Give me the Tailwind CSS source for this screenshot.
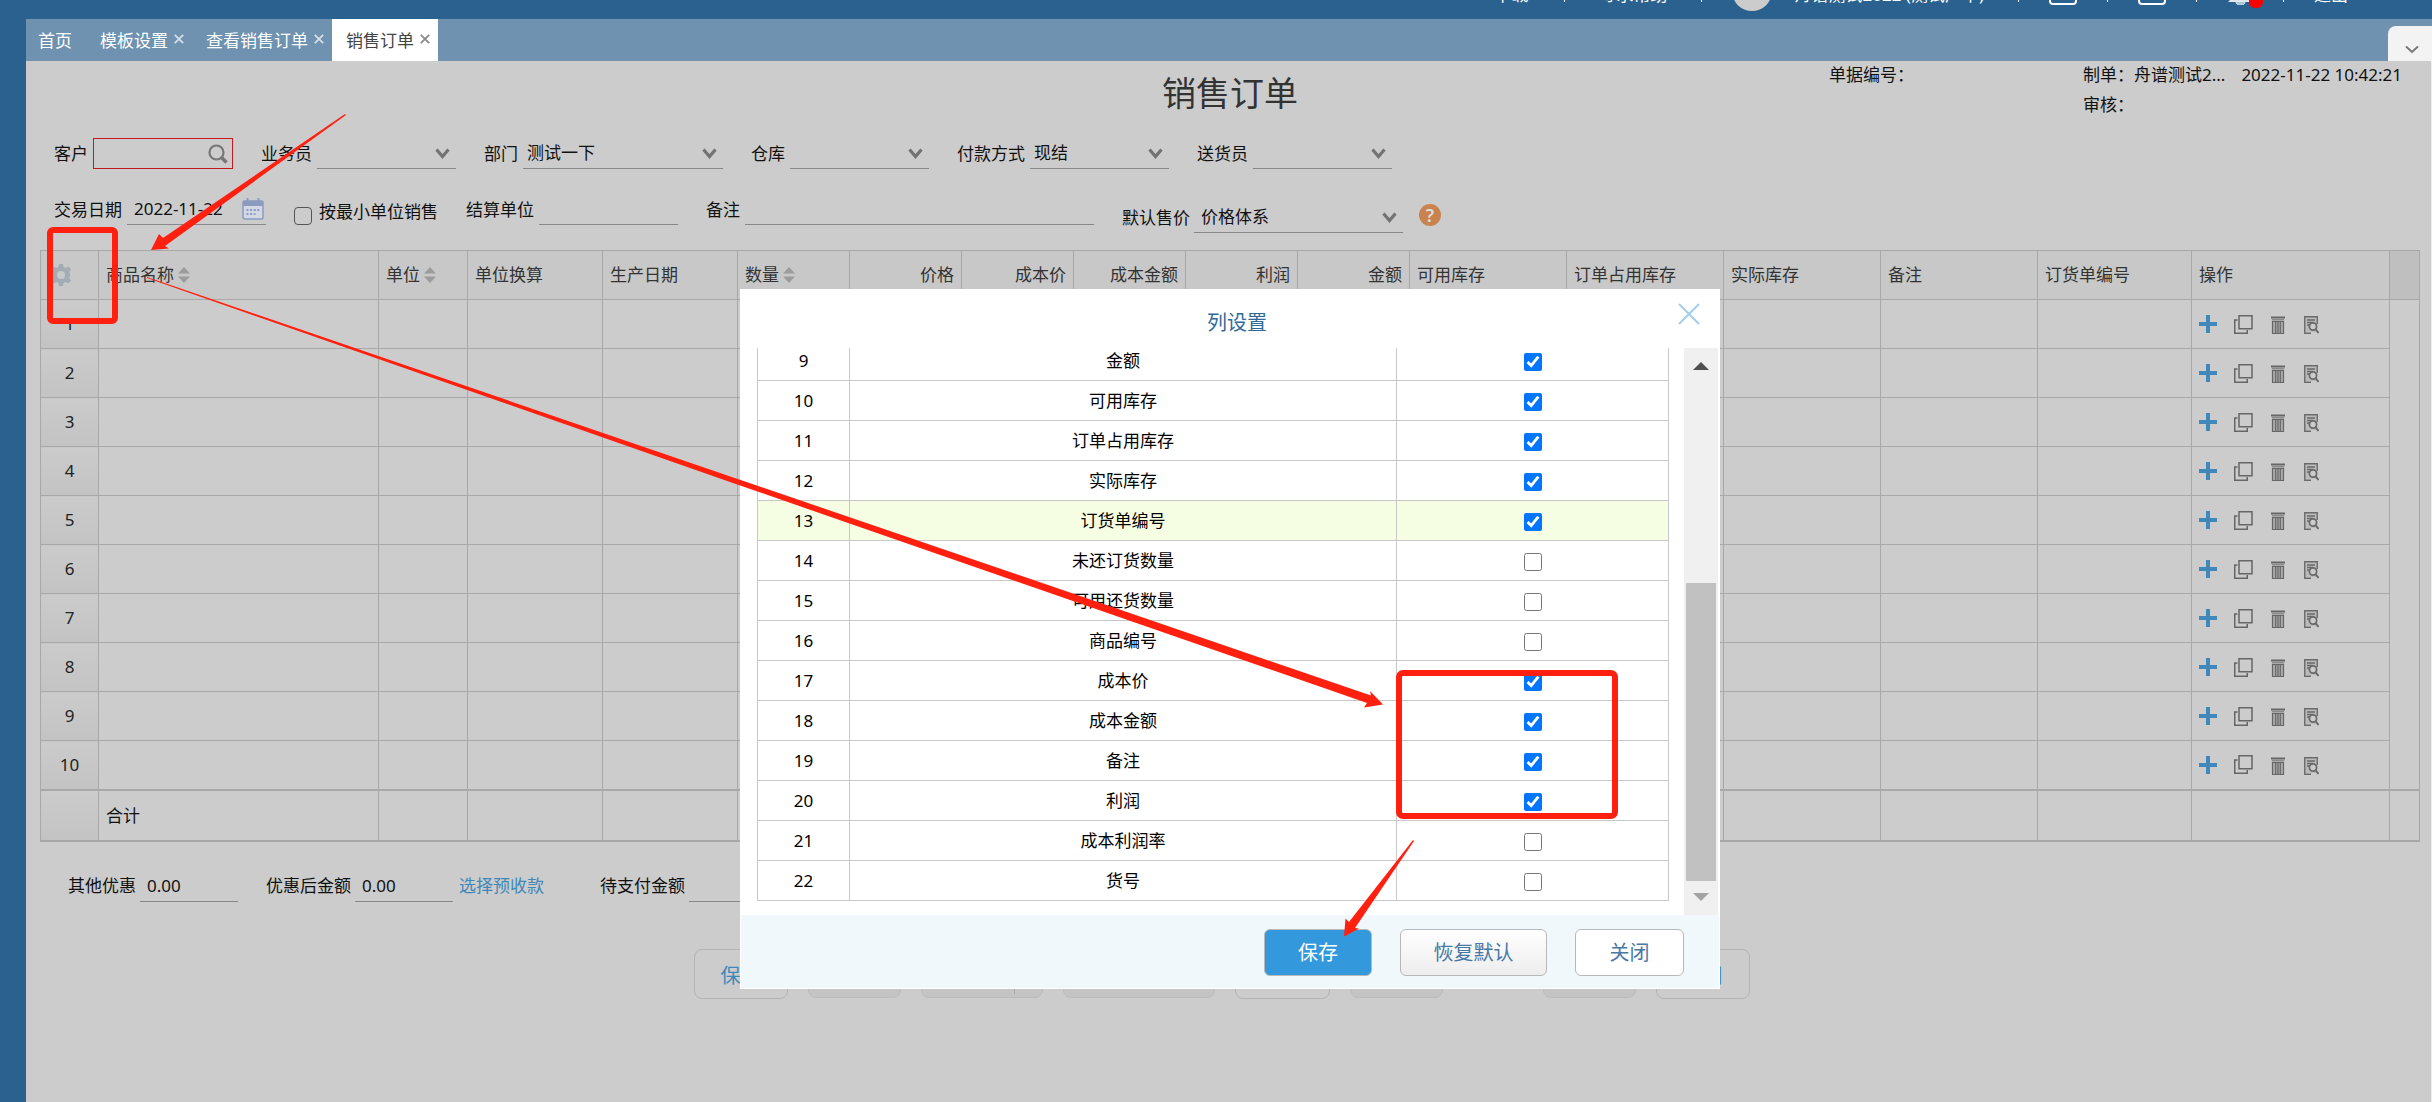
<!DOCTYPE html>
<html lang="zh-CN">
<head>
<meta charset="utf-8">
<title>销售订单</title>
<script src="https://cdn.jsdelivr.net/npm/@tailwindcss/browser@4"></script>
</head>
<body class="relative min-h-screen overflow-x-hidden bg-[#2a618f] font-['Noto_Sans','Noto_Sans_CJK_SC',sans-serif] text-[17px] leading-6 text-[#111]">

<svg class="hidden">
  <symbol id="chev" viewBox="0 0 15 11"><path d="M1.5 1.5 7.5 8.5 13.5 1.5" fill="none" stroke="#727272" stroke-width="3.2"/></symbol>
  <symbol id="sort" viewBox="0 0 12 16"><path d="M6 0 12 6.5H0ZM0 9.500H12L6 16Z" fill="#9c9c9c"/></symbol>
  <symbol id="x" viewBox="0 0 10 10"><path d="M.8.8 9.200 9.200M9.200.8.8 9.200" fill="none" stroke="currentColor" stroke-width="1.800"/></symbol>
  <symbol id="plus" viewBox="0 0 18 18"><path d="M7 0h4v7h7v4h-7v7H7v-7H0V7h7Z" fill="#3f88b9"/></symbol>
  <symbol id="copy" viewBox="0 0 19 19"><path d="M5 .75h13v13H5ZM3.500 5H.75v13.250h12.500V15" fill="none" stroke="#666" stroke-width="1.500"/></symbol>
  <symbol id="trash" viewBox="0 0 14 18"><path d="M0 .5h14v2H0Z" fill="#666"/><path d="M.8 3h12.400v1.500H.8Z" fill="#8a8a8a"/><path d="M1.500 5.500h11v12h-11ZM4.700 5.500v12M7 5.500v12M9.300 5.500v12" fill="#aaa" stroke="#666" stroke-width="1.200"/></symbol>
  <symbol id="find" viewBox="0 0 15 18"><path d="M1 1h12v15H1Z" fill="#bbb"/><path d="M7 17.200H.75V.75h12.500V8M3 4h8M3 6.500h6M3 9h2" fill="none" stroke="#6a6a6a" stroke-width="1.400"/><circle cx="9" cy="10.500" r="3.600" fill="#ccc" stroke="#6a6a6a" stroke-width="1.800"/><path d="m11.500 13 3 4" stroke="#6a6a6a" stroke-width="2"/></symbol>
</svg>

<header class="flex h-[19px] flex-col justify-end overflow-hidden text-white">
  <div class="flex h-12 shrink-0 items-center justify-end gap-[30px] pr-[84px]">
    <div class="flex items-center gap-[34px]">
      <a href="#" class="mr-0.5">下载</a><i class="h-3.5 w-px bg-white"></i>
      <a href="#">寻求帮助</a><i class="h-3.5 w-px bg-white"></i>
    </div>
    <span class="mb-2 size-10 shrink-0 rounded-full bg-[#ccc]"></span>
    <span class="-ml-2 mr-1">舟谱测试2022 (测试产中)</span>
    <i class="h-3.5 w-px bg-white"></i>
    <button aria-label="窗口" class="h-5 w-7 rounded border-2 border-white"></button>
    <i class="h-3.5 w-px bg-white"></i>
    <button aria-label="消息" class="h-5 w-7 rounded border-2 border-white"></button>
    <i class="h-3.5 w-px bg-white"></i>
    <button aria-label="通知" class="relative h-5 w-[26px]">
      <svg viewBox="0 0 26 20" class="h-5 w-[26px]"><path d="M4 14V8a9 9 0 0 1 18 0v6l3 3H1Z" fill="#dfe8ef"/><path d="M9 17a4.500 3 0 0 0 9 0" fill="#a9c3d8" stroke="#dfe8ef"/></svg>
      <span class="absolute -right-2.5 bottom-[-3px] h-5 w-3.5 rounded-md bg-[#f00]"></span>
    </button>
    <i class="h-3.5 w-px bg-white"></i>
    <a href="#">退出</a>
  </div>
</header>

<nav class="ml-[26px] flex h-[42px] items-stretch bg-[#6e92af] pt-px text-white">
  <a href="#" class="flex items-center pl-3 pr-3.5">首页</a>
  <div class="flex items-center gap-1.5 pl-3.5 pr-[11px]"><a href="#">模板设置</a><button aria-label="关闭模板设置" class="mb-1 text-[#d5dfe8]"><svg class="size-2.5"><use href="#x"/></svg></button></div>
  <div class="flex items-center gap-1.5 pl-[11px] pr-2"><a href="#">查看销售订单</a><button aria-label="关闭查看销售订单" class="mb-1 text-[#d5dfe8]"><svg class="size-2.5"><use href="#x"/></svg></button></div>
  <div class="-mt-px flex items-center gap-1.5 bg-white pl-3.5 pr-2 pt-px text-[#444]"><a href="#">销售订单</a><button aria-label="关闭销售订单" class="mb-1 text-[#8a8a8a]"><svg class="size-2.5"><use href="#x"/></svg></button></div>
  <button aria-label="展开" class="ml-auto flex h-[35px] w-11 items-end justify-center self-end rounded-tl-lg bg-[#f3f3f3] pb-[7px] pl-1"><svg viewBox="0 0 14 9" class="h-[9px] w-3.5"><path d="M1 1.500 7 7 13 1.500" fill="none" stroke="#777" stroke-width="2"/></svg></button>
</nav>

<main class="ml-[26px] min-h-[1041px] border-r border-[#eee] bg-[#ccc] pl-3.5 pr-[11px]">
  <div class="grid h-[77px] grid-cols-[1fr_auto_1fr]">
    <span></span>
    <h1 class="pt-2 text-[34px] leading-[48px] text-[#333]">销售订单</h1>
    <div class="flex justify-end gap-[169px] pr-[18px] pt-0.5">
      <span>单据编号：</span>
      <div class="grid grid-cols-[auto_auto] grid-rows-[30px_30px] content-start gap-x-4"><span>制单：舟谱测试2...</span><span>2022-11-22 10:42:21</span><span>审核：</span></div>
    </div>
  </div>

  <form>
    <div class="flex gap-7 pl-3.5">
      <label class="flex items-center gap-[5px]">客户
        <span class="flex h-[31px] w-[140px] items-center border border-[#c4181c] pr-1"><input class="w-0 flex-1 bg-transparent outline-none"><svg viewBox="0 0 20 20" class="size-5"><circle cx="8.500" cy="8.500" r="7" fill="none" stroke="#777" stroke-width="2.200"/><path d="m13.500 13.500 5 5" stroke="#777" stroke-width="3.500"/></svg></span></label>
      <label class="flex items-center gap-[5px]">业务员
        <span class="grid h-[31px] w-[139px] items-center border-b border-[#888]"><select class="col-start-1 row-start-1 appearance-none pl-[7px] outline-none"><option></option></select><svg class="col-start-1 row-start-1 mr-1.5 h-[11px] w-[15px] justify-self-end"><use href="#chev"/></svg></span></label>
      <label class="flex items-center gap-[5px]">部门
        <span class="grid h-[31px] w-[200px] items-center border-b border-[#888]"><select class="col-start-1 row-start-1 appearance-none pl-1 outline-none"><option>测试一下</option></select><svg class="col-start-1 row-start-1 mr-1.5 h-[11px] w-[15px] justify-self-end"><use href="#chev"/></svg></span></label>
      <label class="flex items-center gap-[5px]">仓库
        <span class="grid h-[31px] w-[139px] items-center border-b border-[#888]"><select class="col-start-1 row-start-1 appearance-none pl-[7px] outline-none"><option></option></select><svg class="col-start-1 row-start-1 mr-1.5 h-[11px] w-[15px] justify-self-end"><use href="#chev"/></svg></span></label>
      <label class="flex items-center gap-[5px]">付款方式
        <span class="grid h-[31px] w-[139px] items-center border-b border-[#888]"><select class="col-start-1 row-start-1 appearance-none pl-1 outline-none"><option>现结</option></select><svg class="col-start-1 row-start-1 mr-1.5 h-[11px] w-[15px] justify-self-end"><use href="#chev"/></svg></span></label>
      <label class="flex items-center gap-[5px]">送货员
        <span class="grid h-[31px] w-[139px] items-center border-b border-[#888]"><select class="col-start-1 row-start-1 appearance-none pl-[7px] outline-none"><option></option></select><svg class="col-start-1 row-start-1 mr-1.5 h-[11px] w-[15px] justify-self-end"><use href="#chev"/></svg></span></label>
    </div>
    <div class="mt-[25px] flex h-14 items-start gap-7 pl-3.5">
      <label class="flex items-center gap-[5px]">交易日期
        <span class="flex h-[31px] w-[139px] items-center border-b border-[#888] pl-[7px]"><input value="2022-11-22" class="w-0 flex-1 outline-none"><svg viewBox="0 0 22 22" class="mr-0.5 size-[22px]"><rect x="1" y="3" width="20" height="18" rx="1.500" fill="#d3d8e4" stroke="#8b9bc0" stroke-width="1.500"/><path d="M1 3h20v5H1ZM4.500 0h2v4h-2ZM15.500 0h2v4h-2Z" fill="#8b9bc0"/><path d="M4.500 12h13M4.500 16h9" stroke="#8b9bc0" stroke-width="2" stroke-dasharray="2 1.600"/></svg></span></label>
      <label class="flex h-9 items-center gap-[7px]"><input type="checkbox" class="mt-2 size-[18px] appearance-none rounded border border-[#555]">按最小单位销售</label>
      <label class="flex items-center gap-[5px]">结算单位
        <input class="h-[31px] w-[139px] border-b border-[#888] outline-none"></label>
      <label class="flex items-center gap-[5px]">备注
        <input class="h-[31px] w-[349px] border-b border-[#888] outline-none"></label>
      <div class="mt-2 flex gap-4"><label class="flex items-center gap-1">默认售价
        <span class="grid h-[31px] w-[209px] items-center border-b border-[#888]"><select class="col-start-1 row-start-1 appearance-none pl-[7px] outline-none"><option>价格体系</option></select><svg class="col-start-1 row-start-1 mr-1.5 h-[11px] w-[15px] justify-self-end"><use href="#chev"/></svg></span></label>
        <button type="button" class="mt-0.5 size-[22px] rounded-full bg-[#c98351] text-lg font-semibold leading-[22px] text-[#e2dcd6]">?</button></div>
    </div>
  </form>

  <table class="w-full table-fixed border-collapse border border-[#a8a8a8]">
    <colgroup id="cols"></colgroup>
    <thead><tr id="head" class="h-[49px] bg-[#c8c8c8] text-left text-[#333]"></tr></thead>
    <tbody id="rows"></tbody>
    <tfoot><tr id="foot" class="h-[51px]"></tr></tfoot>
  </table>

  <div class="mt-[29px] flex items-center gap-7 pl-7">
    <label class="flex items-center gap-1">其他优惠 <input value="0.00" class="h-[31px] w-[98px] border-b border-[#888] pl-[7px] outline-none"></label>
    <div class="flex items-center gap-1.5"><label class="flex items-center gap-1">优惠后金额 <input value="0.00" class="h-[31px] w-[98px] border-b border-[#888] pl-[7px] outline-none"></label>
    <a href="#" class="text-[#3f88b9]">选择预收款</a></div>
    <label class="ml-7 flex items-center gap-1">待支付金额 <input class="h-[31px] w-[98px] border-b border-[#888] outline-none"></label>
  </div>

  <div class="mt-[47px] flex justify-center gap-5 pr-[17px] text-xl text-[#3f88b9]">
    <button class="h-[50px] w-[94px] rounded-lg border border-[#b4b4b4] pt-1">保存</button>
    <button aria-label="操作" class="h-[49px] w-[93px] rounded-lg border border-[#bcbcbc] bg-[#c4c4c4]"></button>
    <button aria-label="操作" class="flex h-[49px] w-[122px] justify-end rounded-lg border border-[#bcbcbc] bg-[#c4c4c4] pr-[27px]"><i class="h-11 w-px bg-[#aaa]"></i></button>
    <button aria-label="操作" class="h-[49px] w-[152px] rounded-lg border border-[#bcbcbc] bg-[#c4c4c4]"></button>
    <button aria-label="操作" class="h-[50px] w-[95px] rounded-lg border border-[#b4b4b4]"></button>
    <button aria-label="操作" class="mr-20 h-[49px] w-[93px] rounded-lg border border-[#bcbcbc] bg-[#c4c4c4]"></button>
    <button aria-label="操作" class="h-[49px] w-[93px] rounded-lg border border-[#bcbcbc] bg-[#c4c4c4]"></button>
    <button class="h-[50px] w-[94px] rounded-lg border border-[#b4b4b4] pt-1">关闭</button>
  </div>
</main>

<div class="absolute inset-x-0 top-[289px] flex justify-center pl-7">
  <section role="dialog" aria-labelledby="dlg" class="w-[980px] bg-white">
    <div class="grid h-[59px] grid-cols-[1fr_auto_1fr] pl-3.5">
      <span></span>
      <h2 id="dlg" class="pt-5 text-xl leading-7 text-[#2f6a9a]">列设置</h2>
      <button aria-label="关闭" class="mr-5 mt-3.5 self-start justify-self-end text-[#a3cdec]"><svg viewBox="0 0 22 22" class="size-[22px]"><path d="m1 1 20 20M21 1 1 21" stroke="currentColor" stroke-width="2"/></svg></button>
    </div>
    <div class="flex h-[567px] pl-[17px] pr-0.5">
      <div class="flex flex-1 flex-col justify-end overflow-hidden pb-3.5 pr-[15px]">
        <table class="w-full table-fixed border-collapse text-center text-black">
          <colgroup><col class="w-[92px]"><col><col class="w-[272px]"></colgroup>
          <tbody id="settings"></tbody>
        </table>
      </div>
      <div class="flex w-[34px] flex-col items-center bg-[#f0f0f0]">
        <svg viewBox="0 0 16 8" class="mt-3.5 h-2 w-4"><path d="M8 0 16 8H0Z" fill="#505050"/></svg>
        <div class="mt-[213px] h-[298px] w-[30px] bg-[#c1c1c1]"></div>
        <svg viewBox="0 0 16 8" class="mt-3 h-2 w-4"><path d="M0 0H16L8 8Z" fill="#a3a3a3"/></svg>
      </div>
    </div>
    <div class="flex h-[74px] items-start justify-end gap-7 border border-t-0 border-white bg-[#f1f8fc] pr-[35px] pt-3.5 text-xl text-[#4878a5]">
      <button class="h-[47px] w-[108px] rounded-md border border-[#b8b8b8] bg-[#3498dc] text-white">保存</button>
      <button class="h-[47px] w-[147px] rounded-md border border-[#b8b8b8] bg-linear-to-b from-white to-[#ededed]">恢复默认</button>
      <button class="h-[47px] w-[109px] rounded-md border border-[#b8b8b8] bg-white">关闭</button>
    </div>
  </section>
</div>

<svg class="pointer-events-none absolute left-0 top-0" width="1700" height="1000" fill="#ff2010">
  <g fill="none" stroke="#ff2010" stroke-width="6"><rect x="50" y="230" width="65" height="91" rx="3"/><rect x="1399" y="673" width="216" height="143" rx="4"/></g>
  <path d="M345 114 163 238 159 234 151 250 169 248.500 165 246 346 115Z"/>
  <path d="M147 277 1371 695.500 1370 691 1383 704.500 1364 707.500 1367 703 1230 655.500 730 482 147 278Z"/>
  <path d="M1413 840 1349 922 1345.500 918.500 1344 936.500 1359 928.500 1355 928 1414 841Z"/>
</svg>

<script>
const columns = [
  [58, ''], [0, '商品名称', 's'], [89, '单位', 's'], [135, '单位换算'], [135, '生产日期'], [112, '数量', 's'],
  [112, '价格', 'r'], [112, '成本价', 'r'], [112, '成本金额', 'r'], [112, '利润', 'r'], [112, '金额', 'r'],
  [157, '可用库存'], [157, '订单占用库存'], [157, '实际库存'], [157, '备注'], [154, '订货单编号'], [198, '操作'], [30, '']
];
const cell = 'border border-[#a8a8a8]';
const gear = '<button aria-label="列设置" class="ml-2 block"><svg viewBox="0 0 24 24" class="size-6"><path fill="#a3acb5" fill-rule="evenodd" d="M10 1h4l.6 3.200 2 .9 2.900-1.700 2.600 3-1.900 2.600.7 2h.1l0 2-.8 2 1.900 2.600-2.600 3-2.900-1.700-2 .9L14 23h-4l-.6-3.200-2-.9-2.900 1.700-2.600-3L3.800 15 3 13v-2l.8-2-1.900-2.600 2.600-3 2.900 1.700 2-.9ZM12 8a4 4 0 1 0 0 8 4 4 0 0 0 0-8Z"/></svg></button>';
const byId = id => document.getElementById(id);
byId('cols').innerHTML = columns.map(([w]) => w ? `<col style="width:${w}px">` : '<col>').join('');
byId('head').innerHTML = columns.map(([, t, k], i) =>
  i === 0 ? `<th class="${cell}">${gear}</th>` :
  i === columns.length - 1 ? `<td class="${cell} bg-[#bfbfbf]"></td>` :
  `<th class="${cell} px-[7px] font-normal ${k === 'r' ? 'text-right' : ''}">${t}${k === 's' ? '<svg class="ml-1 inline h-4 w-3 align-[-2px]"><use href="#sort"/></svg>' : ''}</th>`).join('');
const actions = `<div class="flex items-center">
  <button aria-label="新增"><svg class="size-[18px]"><use href="#plus"/></svg></button>
  <button aria-label="复制" class="ml-[17px]"><svg class="size-[19px]"><use href="#copy"/></svg></button>
  <button aria-label="删除" class="ml-[18px] mt-0.5"><svg class="h-[18px] w-3.5"><use href="#trash"/></svg></button>
  <button aria-label="查看" class="ml-[19px] mt-0.5"><svg class="h-[18px] w-[15px]"><use href="#find"/></svg></button></div>`;
byId('rows').innerHTML = Array.from({ length: 10 }, (_, r) => `<tr class="h-[49px]">` + columns.map((c, i) =>
  i === 0 ? `<td class="${cell} bg-linear-to-b from-[#cbcbcb] to-[#c3c3c3] text-center text-[#222]">${r + 1}</td>` :
  i === 16 ? `<td class="${cell} px-[7px]">${actions}</td>` :
  i === 17 ? '<td></td>' : `<td class="${cell}"></td>`).join('') + '</tr>').join('');
byId('foot').innerHTML = columns.map((c, i) =>
  `<td class="${cell} border-t-2 border-b-2 px-[7px] pt-0.5 ${i === 0 ? 'bg-linear-to-b from-[#cbcbcb] to-[#c3c3c3]' : ''}">${i === 1 ? '合计' : ''}</td>`).join('');

const settings = [['金额', 1], ['可用库存', 1], ['订单占用库存', 1], ['实际库存', 1], ['订货单编号', 1], ['未还订货数量', 0], ['可用还货数量', 0],
  ['商品编号', 0], ['成本价', 1], ['成本金额', 1], ['备注', 1], ['利润', 1], ['成本利润率', 0], ['货号', 0]];
byId('settings').innerHTML = settings.map(([t, on], i) => `<tr class="h-10 ${i === 4 ? 'bg-[#f5fee2]' : ''}">
  <td class="border border-[#c8c8c8]">${i + 9}</td><td class="border border-[#c8c8c8]"><label for="c${i}">${t}</label></td>
  <td class="border border-[#c8c8c8] pt-0.5"><input id="c${i}" type="checkbox" class="mx-auto block size-[18px] accent-[#0075ff]" ${on ? 'checked' : ''}></td></tr>`).join('');
</script>
</body>
</html>
